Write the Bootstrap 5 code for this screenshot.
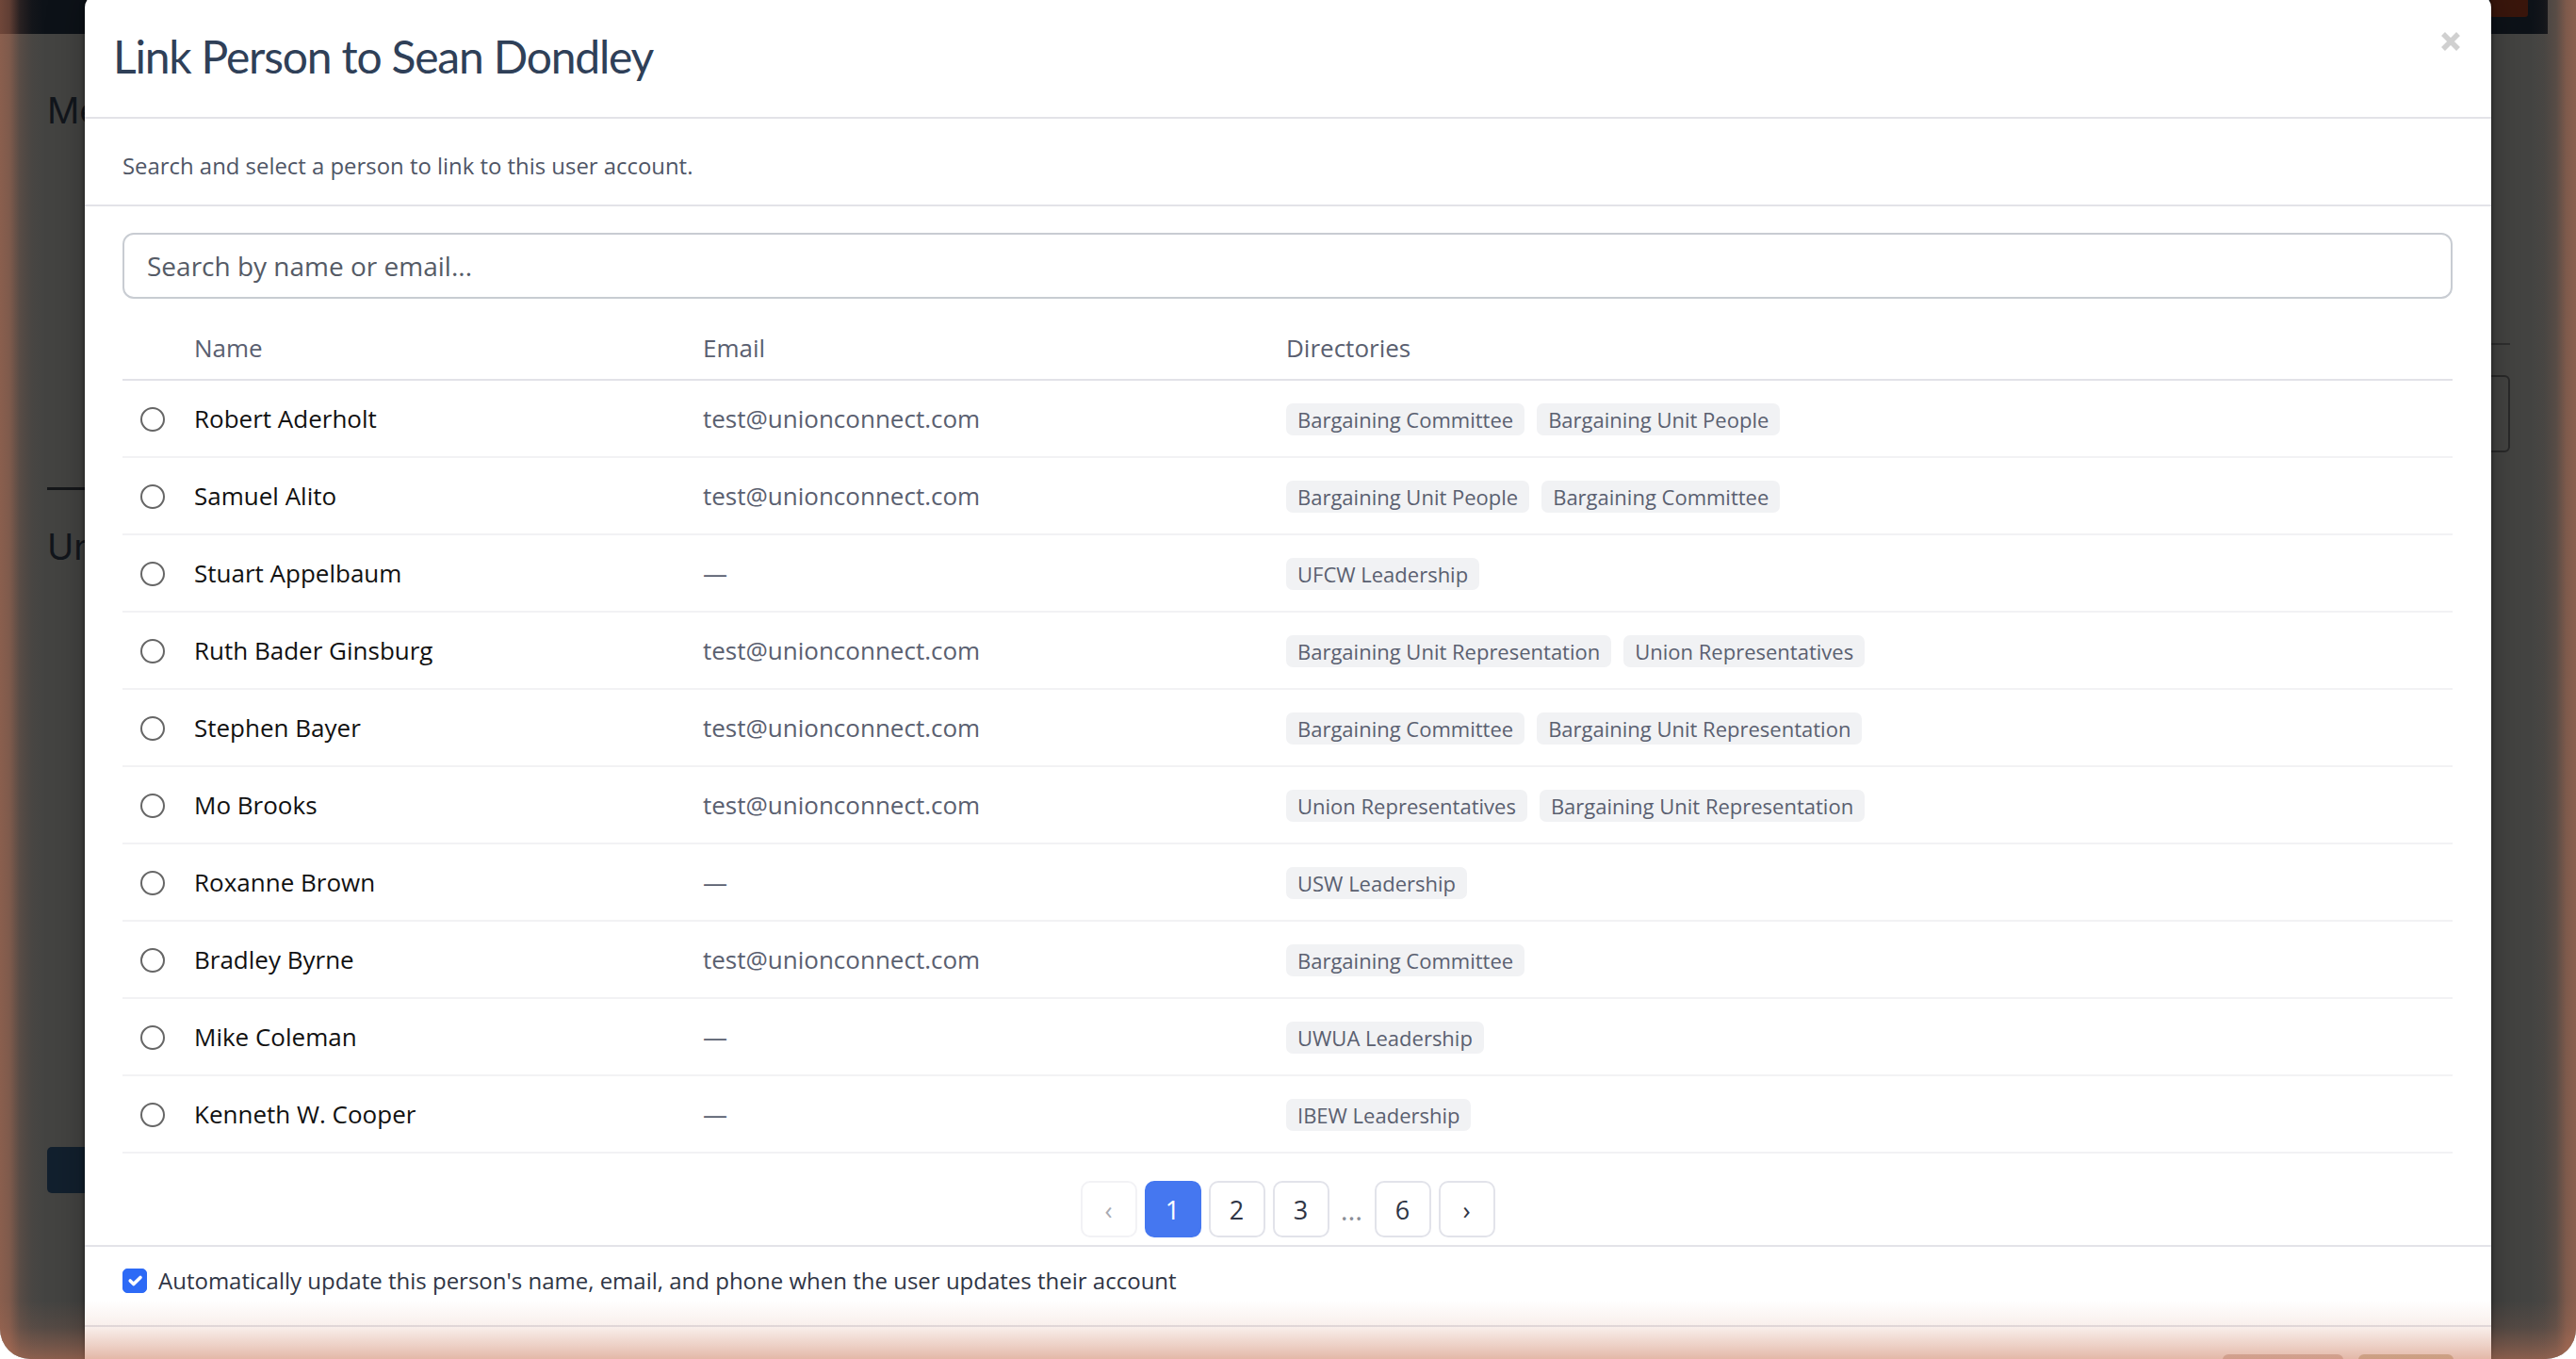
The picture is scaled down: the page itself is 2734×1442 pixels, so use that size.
<!DOCTYPE html>
<html lang="en">

<head>
  <meta charset="UTF-8" />
  <title>Link Person to Sean Dondley</title>
  <link href="https://cdn.jsdelivr.net/npm/bootstrap@5.3.3/dist/css/bootstrap.min.css" rel="stylesheet" />
  <style>
    html, body { height: 100%; }
    body { background: #fff; overflow: hidden; font-family: "Open Sans", sans-serif; }

    /* page behind the modal */
    .shell { position: relative; height: 100vh; overflow: hidden; background: #444442; border-radius: 0 0 32px 32px; }
    .under-bar { height: 36px; width: 2704px; background: #0d1218; }
    .under-btn { width: 40px; height: 18px; margin-right: 21px; background: #3a160c; border-radius: 0 0 3px 3px; }
    .under-page { padding: 0 70px 0 50px; height: 1406px; }
    .under-title { font: 400 38px "Inter", sans-serif; color: #12161c; margin: 0; }
    .under-title-first { margin-top: 58px; }
    .under-rule-left { border-top: 3px solid #15171a; margin: 377px 0 37px; width: 400px; }
    .under-rule-right { border-top: 2px solid #2f2f2f; margin: 328px 0 32px; }
    .under-box { height: 82px; border: 2px solid #2a2a2a; border-radius: 6px; }
    .under-main-btn { width: 200px; height: 49px; background: #12202e; border-radius: 5px; margin-top: 614px; }

    /* modal */
    .link-modal { position: absolute; left: 90px; top: -6px; width: 2554px; height: 1500px; background: #fff; border-radius: 14px; box-shadow: 0 0 5px rgba(0, 0, 0, .5), 0 0 40px rgba(0, 0, 0, .3); }
    .link-head { height: 132px; padding: 0 30px; border-bottom: 2px solid #e3e3e8; }
    .link-title { font: 400 48px "Lato", sans-serif; letter-spacing: -1.2px; color: #2f4058; margin: 0; }
    .link-close { position: absolute; top: 40px; right: 33px; width: 20px; height: 20px; }
    .link-desc { height: 93px; padding: 8px 40px 0; border-bottom: 2px solid #e3e3e8; font-size: 23.9px; color: #4f5666; }
    .link-body { padding: 28px 41px 0 40px; height: 1102px; }
    .link-search.form-control { height: 70px; padding: 0 24px; font-size: 28px; border: 2px solid #c8ccd2; border-radius: 12px; box-shadow: none; }
    .link-search::placeholder { color: #555b66; opacity: 1; }

    .people { table-layout: fixed; margin: 0; width: 100%; }
    .people th, .people td { padding: 0 19px; vertical-align: middle; background: transparent; }
    .people th { height: 86px; padding-top: 20px; font-weight: 400; font-size: 26px; color: #5a6070; border-bottom: 2px solid #e2e2e8; }
    .people td { height: 82px; padding-top: 1px; font-size: 26px; color: #5a6070; border-bottom: 2px solid #f2f2f4; }
    .people td.who { color: #111; }
    .w-radio { width: 57px; }
    .w-name { width: 540px; }
    .w-mail { width: 619px; }
    .people .form-check-input { display: block; width: 26px; height: 26px; margin: 0; border: 2px solid #666; }
    .tag { display: inline-block; height: 34px; line-height: 34px; padding: 0 12px; margin-right: 13px; font-size: 22px; background: #f1f2f4; color: #5a6070; border-radius: 7px; }

    .pager { margin-top: 29px; }
    .pager-btn { width: 60px; height: 60px; background: #fff; border: 2px solid #e2e3ea; border-radius: 10px; font-size: 27px; color: #2f3545; line-height: 1; padding: 0; }
    .pager-btn.on { background: #4577f0; border-color: #4577f0; color: #fff; }
    .pager-btn.off { border-color: #f2f2f5; color: #a9abb3; }
    .pager-dots { width: 32px; text-align: center; color: #8a8d96; font-size: 30px; }

    .link-opt { height: 87px; padding: 0 40px 12px; border-top: 2px solid #e3e3e8; border-bottom: 2px solid #e3e3e8; font-size: 24px; color: #2f3545; }
    .link-opt .form-check-input { width: 26px; height: 26px; margin: 0 12px 0 0; border-radius: 5px; background-color: #2d6af6; border-color: #2d6af6; }
    .link-foot { padding: 29px 40px 0 0; }
    .foot-btn { height: 40px; border-radius: 6px; }
    .foot-cancel { width: 128px; background: #d9c6bf; }
    .foot-save { width: 101px; background: #cfc6ad; }

    /* warm glow round the window edge, sits over everything */
    .edge-glow {
      position: absolute;
      inset: 0;
      pointer-events: none;
      background:
        linear-gradient(90deg, rgba(202, 119, 88, .52), rgba(202, 119, 88, .44) 10px, rgba(202, 119, 88, .15) 21px, rgba(202, 119, 88, .03) 34px, transparent 46px),
        linear-gradient(270deg, rgba(202, 119, 88, .52), rgba(202, 119, 88, .44) 10px, rgba(202, 119, 88, .15) 21px, rgba(202, 119, 88, .03) 34px, transparent 46px),
        linear-gradient(0deg, rgba(202, 119, 88, .52), rgba(202, 119, 88, .35) 14px, rgba(202, 119, 88, .12) 34px, transparent 62px);
    }
  </style>
</head>

<body>
  <div class="shell">
    <!-- page behind -->
    <div class="under-bar d-flex justify-content-end">
      <div class="under-btn"></div>
    </div>
    <div class="under-page d-flex justify-content-between">
      <div class="d-flex flex-column">
        <h2 class="under-title under-title-first">Members</h2>
        <div class="under-rule-left"></div>
        <h2 class="under-title">Unions</h2>
        <div class="under-main-btn"></div>
      </div>
      <div class="w-25">
        <div class="under-rule-right"></div>
        <div class="under-box"></div>
      </div>
    </div>

    <!-- modal -->
    <div class="link-modal">
      <div class="link-head d-flex align-items-center">
        <h1 class="link-title">Link Person to Sean Dondley</h1>
      </div>
      <svg class="link-close" viewBox="0 0 20 20" aria-label="Close">
        <path d="M2 2 18 18M18 2 2 18" stroke="#d0d0d0" stroke-width="5.5" fill="none" />
      </svg>

      <div class="link-desc d-flex align-items-center">Search and select a person to link to this user account.</div>

      <div class="link-body">
        <input class="form-control link-search" type="text" placeholder="Search by name or email..." />

        <table class="table people">
          <colgroup>
            <col class="w-radio" />
            <col class="w-name" />
            <col class="w-mail" />
            <col />
          </colgroup>
          <thead>
            <tr><th></th><th>Name</th><th>Email</th><th>Directories</th></tr>
          </thead>
          <tbody>
            <tr>
              <td><input class="form-check-input" type="radio" name="person" /></td>
              <td class="who">Robert Aderholt</td>
              <td>test@unionconnect.com</td>
              <td><span class="tag">Bargaining Committee</span><span class="tag">Bargaining Unit People</span></td>
            </tr>
            <tr>
              <td><input class="form-check-input" type="radio" name="person" /></td>
              <td class="who">Samuel Alito</td>
              <td>test@unionconnect.com</td>
              <td><span class="tag">Bargaining Unit People</span><span class="tag">Bargaining Committee</span></td>
            </tr>
            <tr>
              <td><input class="form-check-input" type="radio" name="person" /></td>
              <td class="who">Stuart Appelbaum</td>
              <td>—</td>
              <td><span class="tag">UFCW Leadership</span></td>
            </tr>
            <tr>
              <td><input class="form-check-input" type="radio" name="person" /></td>
              <td class="who">Ruth Bader Ginsburg</td>
              <td>test@unionconnect.com</td>
              <td><span class="tag">Bargaining Unit Representation</span><span class="tag">Union Representatives</span></td>
            </tr>
            <tr>
              <td><input class="form-check-input" type="radio" name="person" /></td>
              <td class="who">Stephen Bayer</td>
              <td>test@unionconnect.com</td>
              <td><span class="tag">Bargaining Committee</span><span class="tag">Bargaining Unit Representation</span></td>
            </tr>
            <tr>
              <td><input class="form-check-input" type="radio" name="person" /></td>
              <td class="who">Mo Brooks</td>
              <td>test@unionconnect.com</td>
              <td><span class="tag">Union Representatives</span><span class="tag">Bargaining Unit Representation</span></td>
            </tr>
            <tr>
              <td><input class="form-check-input" type="radio" name="person" /></td>
              <td class="who">Roxanne Brown</td>
              <td>—</td>
              <td><span class="tag">USW Leadership</span></td>
            </tr>
            <tr>
              <td><input class="form-check-input" type="radio" name="person" /></td>
              <td class="who">Bradley Byrne</td>
              <td>test@unionconnect.com</td>
              <td><span class="tag">Bargaining Committee</span></td>
            </tr>
            <tr>
              <td><input class="form-check-input" type="radio" name="person" /></td>
              <td class="who">Mike Coleman</td>
              <td>—</td>
              <td><span class="tag">UWUA Leadership</span></td>
            </tr>
            <tr>
              <td><input class="form-check-input" type="radio" name="person" /></td>
              <td class="who">Kenneth W. Cooper</td>
              <td>—</td>
              <td><span class="tag">IBEW Leadership</span></td>
            </tr>
          </tbody>
        </table>

        <div class="pager d-flex justify-content-center align-items-center gap-2">
          <button class="pager-btn off" type="button">‹</button>
          <button class="pager-btn on" type="button">1</button>
          <button class="pager-btn" type="button">2</button>
          <button class="pager-btn" type="button">3</button>
          <span class="pager-dots">…</span>
          <button class="pager-btn" type="button">6</button>
          <button class="pager-btn" type="button">›</button>
        </div>
      </div>

      <div class="link-opt d-flex align-items-center">
        <input class="form-check-input" type="checkbox" checked />
        <span>Automatically update this person's name, email, and phone when the user updates their account</span>
      </div>

      <div class="link-foot d-flex justify-content-end gap-3">
        <div class="foot-btn foot-cancel"></div>
        <div class="foot-btn foot-save"></div>
      </div>
    </div>

    <div class="edge-glow"></div>
  </div>

  <script src="https://cdn.jsdelivr.net/npm/bootstrap@5.3.3/dist/js/bootstrap.bundle.min.js"></script>
</body>

</html>
